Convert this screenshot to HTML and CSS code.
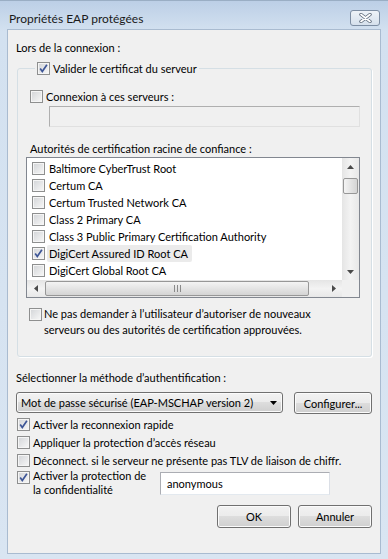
FILE: index.html
```html
<!DOCTYPE html>
<html>
<head>
  <meta charset="UTF-8">
  <title>Propriétés EAP protégées</title>
  <link rel="stylesheet" href="styles.css">
</head>
<body>
  <div class="window">
    <div class="titlebar">
      <span class="title">Propriétés EAP protégées</span>
      <span class="close">
        <svg width="13" height="10" viewBox="0 0 13 10">
          <path d="M2 1.5l9 7M11 1.5l-9 7" stroke="#5a6778" stroke-width="3.4" stroke-linecap="round"/>
          <path d="M2 1.5l9 7M11 1.5l-9 7" stroke="#fff" stroke-width="1.8" stroke-linecap="round"/>
        </svg>
      </span>
    </div>

    <div class="client">
      <div class="label">Lors de la connexion :</div>

      <fieldset class="group">
        <legend>
          <div class="check">
            <span class="cb on"><svg width="11" height="11" viewBox="0 0 11 11"><path d="M2.2 5.4l2.1 3L8.9 1.8" fill="none" stroke="#3d5596" stroke-width="1.7"/></svg></span>
            <span>Valider le certificat du serveur</span>
          </div>
        </legend>

        <div class="check">
          <span class="cb"></span>
          <span>Connexion à ces serveurs :</span>
        </div>
        <div class="textbox servers"></div>

        <div class="label trust">Autorités de certification racine de confiance :</div>

        <div class="listbox">
          <div class="list-main">
            <div class="items">
              <div class="item"><span class="cb"></span><span class="name">Baltimore CyberTrust Root</span></div>
              <div class="item"><span class="cb"></span><span class="name">Certum CA</span></div>
              <div class="item"><span class="cb"></span><span class="name">Certum Trusted Network CA</span></div>
              <div class="item"><span class="cb"></span><span class="name">Class 2 Primary CA</span></div>
              <div class="item"><span class="cb"></span><span class="name">Class 3 Public Primary Certification Authority</span></div>
              <div class="item"><span class="cb on"><svg width="11" height="11" viewBox="0 0 11 11"><path d="M2.2 5.4l2.1 3L8.9 1.8" fill="none" stroke="#3d5596" stroke-width="1.7"/></svg></span><span class="name selected">DigiCert Assured ID Root CA</span></div>
              <div class="item"><span class="cb"></span><span class="name">DigiCert Global Root CA</span></div>
            </div>
            <div class="vscroll">
              <div class="sbtn"><svg width="7" height="4" viewBox="0 0 7 4"><path d="M0 4L3.5 0 7 4z" fill="#4a4a4a"/></svg></div>
              <div class="vtrack"><div class="vthumb"></div></div>
              <div class="sbtn"><svg width="7" height="4" viewBox="0 0 7 4"><path d="M0 0L3.5 4 7 0z" fill="#4a4a4a"/></svg></div>
            </div>
          </div>
          <div class="list-foot">
            <div class="hscroll">
              <div class="sbtn"><svg width="4" height="7" viewBox="0 0 4 7"><path d="M4 0L0 3.5 4 7z" fill="#4a4a4a"/></svg></div>
              <div class="htrack">
                <div class="hthumb">
                  <svg width="7" height="7" viewBox="0 0 7 7"><path d="M0.5 0v7M3.5 0v7M6.5 0v7" stroke="#8a8a8a" stroke-width="1"/></svg>
                </div>
              </div>
              <div class="sbtn"><svg width="4" height="7" viewBox="0 0 4 7"><path d="M0 0L4 3.5 0 7z" fill="#4a4a4a"/></svg></div>
            </div>
            <div class="corner"></div>
          </div>
        </div>

        <div class="check multi">
          <span class="cb"></span>
          <span>Ne pas demander à l’utilisateur d’autoriser de nouveaux<br>serveurs ou des autorités de certification approuvées.</span>
        </div>
      </fieldset>

      <div class="label method">Sélectionner la méthode d’authentification :</div>
      <div class="method-row">
        <div class="combo">
          <span>Mot de passe sécurisé (EAP-MSCHAP version 2)</span>
          <svg width="7" height="4" viewBox="0 0 7 4"><path d="M0 0L3.5 4 7 0z" fill="#000"/></svg>
        </div>
        <button class="btn configure">Configurer...</button>
      </div>

      <div class="options">
        <div class="check row">
          <span class="cb on"><svg width="11" height="11" viewBox="0 0 11 11"><path d="M2.2 5.4l2.1 3L8.9 1.8" fill="none" stroke="#3d5596" stroke-width="1.7"/></svg></span>
          <span>Activer la reconnexion rapide</span>
        </div>
        <div class="check row">
          <span class="cb"></span>
          <span>Appliquer la protection d’accès réseau</span>
        </div>
        <div class="check row">
          <span class="cb"></span>
          <span>Déconnect. si le serveur ne présente pas TLV de liaison de chiffr.</span>
        </div>
      </div>

      <div class="privacy-row">
        <div class="check privacy">
          <span class="cb on"><svg width="11" height="11" viewBox="0 0 11 11"><path d="M2.2 5.4l2.1 3L8.9 1.8" fill="none" stroke="#3d5596" stroke-width="1.7"/></svg></span>
          <span>Activer la protection de<br>la confidentialité</span>
        </div>
        <div class="textbox identity">anonymous</div>
      </div>

      <div class="buttons">
        <button class="btn">OK</button>
        <button class="btn">Annuler</button>
      </div>
    </div>
  </div>
</body>
</html>
```

FILE: styles.css
```css
body {
  margin: 0;
  font-family: Lato, "Liberation Sans", sans-serif;
  font-size: 11px;
  line-height: 15px;
  color: #000;
}
.window {
  width: 388px;
  height: 559px;
  box-sizing: border-box;
  display: flex;
  flex-direction: column;
  background: linear-gradient(#bccfe6, #d3e1f0 30px, #d9e5f2);
  border-top: 1px solid #9aaec4;
}
.titlebar {
  height: 28px;
  box-sizing: border-box;
  display: flex;
  align-items: flex-start;
  justify-content: space-between;
  padding: 9px 8px 0 9px;
}
.title {
  font-size: 12px;
  color: #1a1a1a;
  margin-top: 1px;
}
.close {
  width: 30px;
  height: 16px;
  box-sizing: border-box;
  border: 1px solid #7d8ea3;
  border-radius: 3px;
  background: linear-gradient(#eef3f8, #d5e0ec);
  display: flex;
  align-items: center;
  justify-content: center;
}
.client {
  flex: 1;
  margin: 0 7px 5px 7px;
  border: 1px solid #a9bbd0;
  background: #f0f0f0;
  padding: 10px 8px 0 8px;
}
.label {
  height: 15px;
}

/* group box */
.group {
  margin: 6px 0 0 1px;
  padding: 13px 11px 18px 12px;
  border: 1px solid #d5dfe5;
  border-radius: 3px;
  box-shadow: 1px 1px 0 #fff;
}
.group legend {
  padding: 0 2px;
  margin-left: 5px;
}
.check {
  display: flex;
  align-items: center;
  gap: 3px;
  height: 15px;
}
.cb {
  width: 13px;
  height: 13px;
  box-sizing: border-box;
  flex: none;
  border: 1px solid #8e8f8f;
  background: linear-gradient(135deg, #d2d4d7, #f8f8f8);
  box-shadow: inset 0 0 0 1px #f5f5f5;
  display: flex;
  align-items: center;
  justify-content: center;
}
.textbox {
  box-sizing: border-box;
  border: 1px solid #abadb3;
  border-right-color: #dbdfe6;
  border-bottom-color: #e3e9ef;
  background: #fff;
}
.servers {
  margin: 2px 0 0 19px;
  width: 311px;
  height: 21px;
  background: #f0f0f0;
  border-color: #afafaf #e0e0e0 #e0e0e0 #afafaf;
}
.trust {
  margin-top: 14px;
}

/* certificate list */
.listbox {
  margin: 1px 0 0 -4px;
  width: 334px;
  height: 141px;
  box-sizing: border-box;
  border: 1px solid #828790;
  background: #fff;
  display: flex;
  flex-direction: column;
}
.list-main {
  display: flex;
  height: 122px;
}
.items {
  flex: 1;
  padding: 2px 0 0 5px;
}
.item {
  height: 17px;
  display: flex;
  align-items: center;
  gap: 2px;
}
.item .name {
  padding: 1px 2px;
  border-radius: 2px;
}
.item .selected {
  background: #ebebeb;
  padding: 1px 4px 1px 2px;
}
.vscroll {
  width: 17px;
  display: flex;
  flex-direction: column;
  background: linear-gradient(90deg, #e5e5e5, #f3f3f3 50%, #e8e8e8);
}
.sbtn {
  width: 17px;
  height: 17px;
  flex: none;
  display: flex;
  align-items: center;
  justify-content: center;
}
.vtrack {
  flex: 1;
}
.vthumb {
  margin: 3px 0 0 1px;
  width: 15px;
  height: 16px;
  box-sizing: border-box;
  border: 1px solid #979797;
  border-radius: 2px;
  background: linear-gradient(90deg, #f4f4f4, #e4e4e4 50%, #d4d4d4);
}
.list-foot {
  display: flex;
  height: 17px;
}
.hscroll {
  flex: 1;
  display: flex;
  background: linear-gradient(#e5e5e5, #f3f3f3 50%, #e8e8e8);
}
.htrack {
  flex: 1;
}
.hthumb {
  margin: 1px 0 0 1px;
  width: 264px;
  height: 15px;
  box-sizing: border-box;
  border: 1px solid #979797;
  border-radius: 2px;
  background: linear-gradient(#f4f4f4, #e4e4e4 50%, #d4d4d4);
  display: flex;
  align-items: center;
  justify-content: center;
}
.corner {
  width: 17px;
  background: #f0f0f0;
}
.check.multi {
  margin-top: 8px;
  height: auto;
  align-items: flex-start;
  line-height: 16px;
  gap: 2px;
}
.check.multi .cb {
  margin: 2px 0 0 -1px;
}

/* authentication method */
.method {
  margin-top: 13px;
}
.method-row {
  margin-top: 7px;
  display: flex;
  align-items: flex-start;
  gap: 11px;
}
.combo {
  width: 268px;
  height: 21px;
  box-sizing: border-box;
  border: 1px solid #707070;
  border-radius: 3px;
  background: linear-gradient(#f2f2f2, #ebebeb 50%, #dddddd 50%, #cfcfcf);
  box-shadow: inset 0 0 0 1px #fbfbfb;
  display: flex;
  align-items: center;
  justify-content: space-between;
  padding: 0 5px 0 4px;
}
.btn {
  font: inherit;
  color: #000;
  height: 23px;
  width: 74px;
  padding: 0;
  border: 1px solid #707070;
  border-radius: 3px;
  background: linear-gradient(#f2f2f2, #ebebeb 50%, #dddddd 50%, #cfcfcf);
  box-shadow: inset 0 0 0 1px #fbfbfb;
}
.configure {
  width: 78px;
  height: 22px;
}
.options {
  margin: 1px 0 0 1px;
}
.check.row {
  height: 18px;
}
.privacy-row {
  display: flex;
  align-items: flex-start;
  margin-left: 1px;
}
.check.privacy {
  height: auto;
  align-items: flex-start;
  line-height: 14px;
  width: 143px;
}
.check.privacy .cb {
  margin-top: 2px;
}
.identity {
  margin-top: 3px;
  width: 170px;
  height: 23px;
  padding: 0 6px;
  line-height: 21px;
}
.buttons {
  margin-top: 8px;
  display: flex;
  justify-content: flex-end;
  gap: 7px;
}
```
